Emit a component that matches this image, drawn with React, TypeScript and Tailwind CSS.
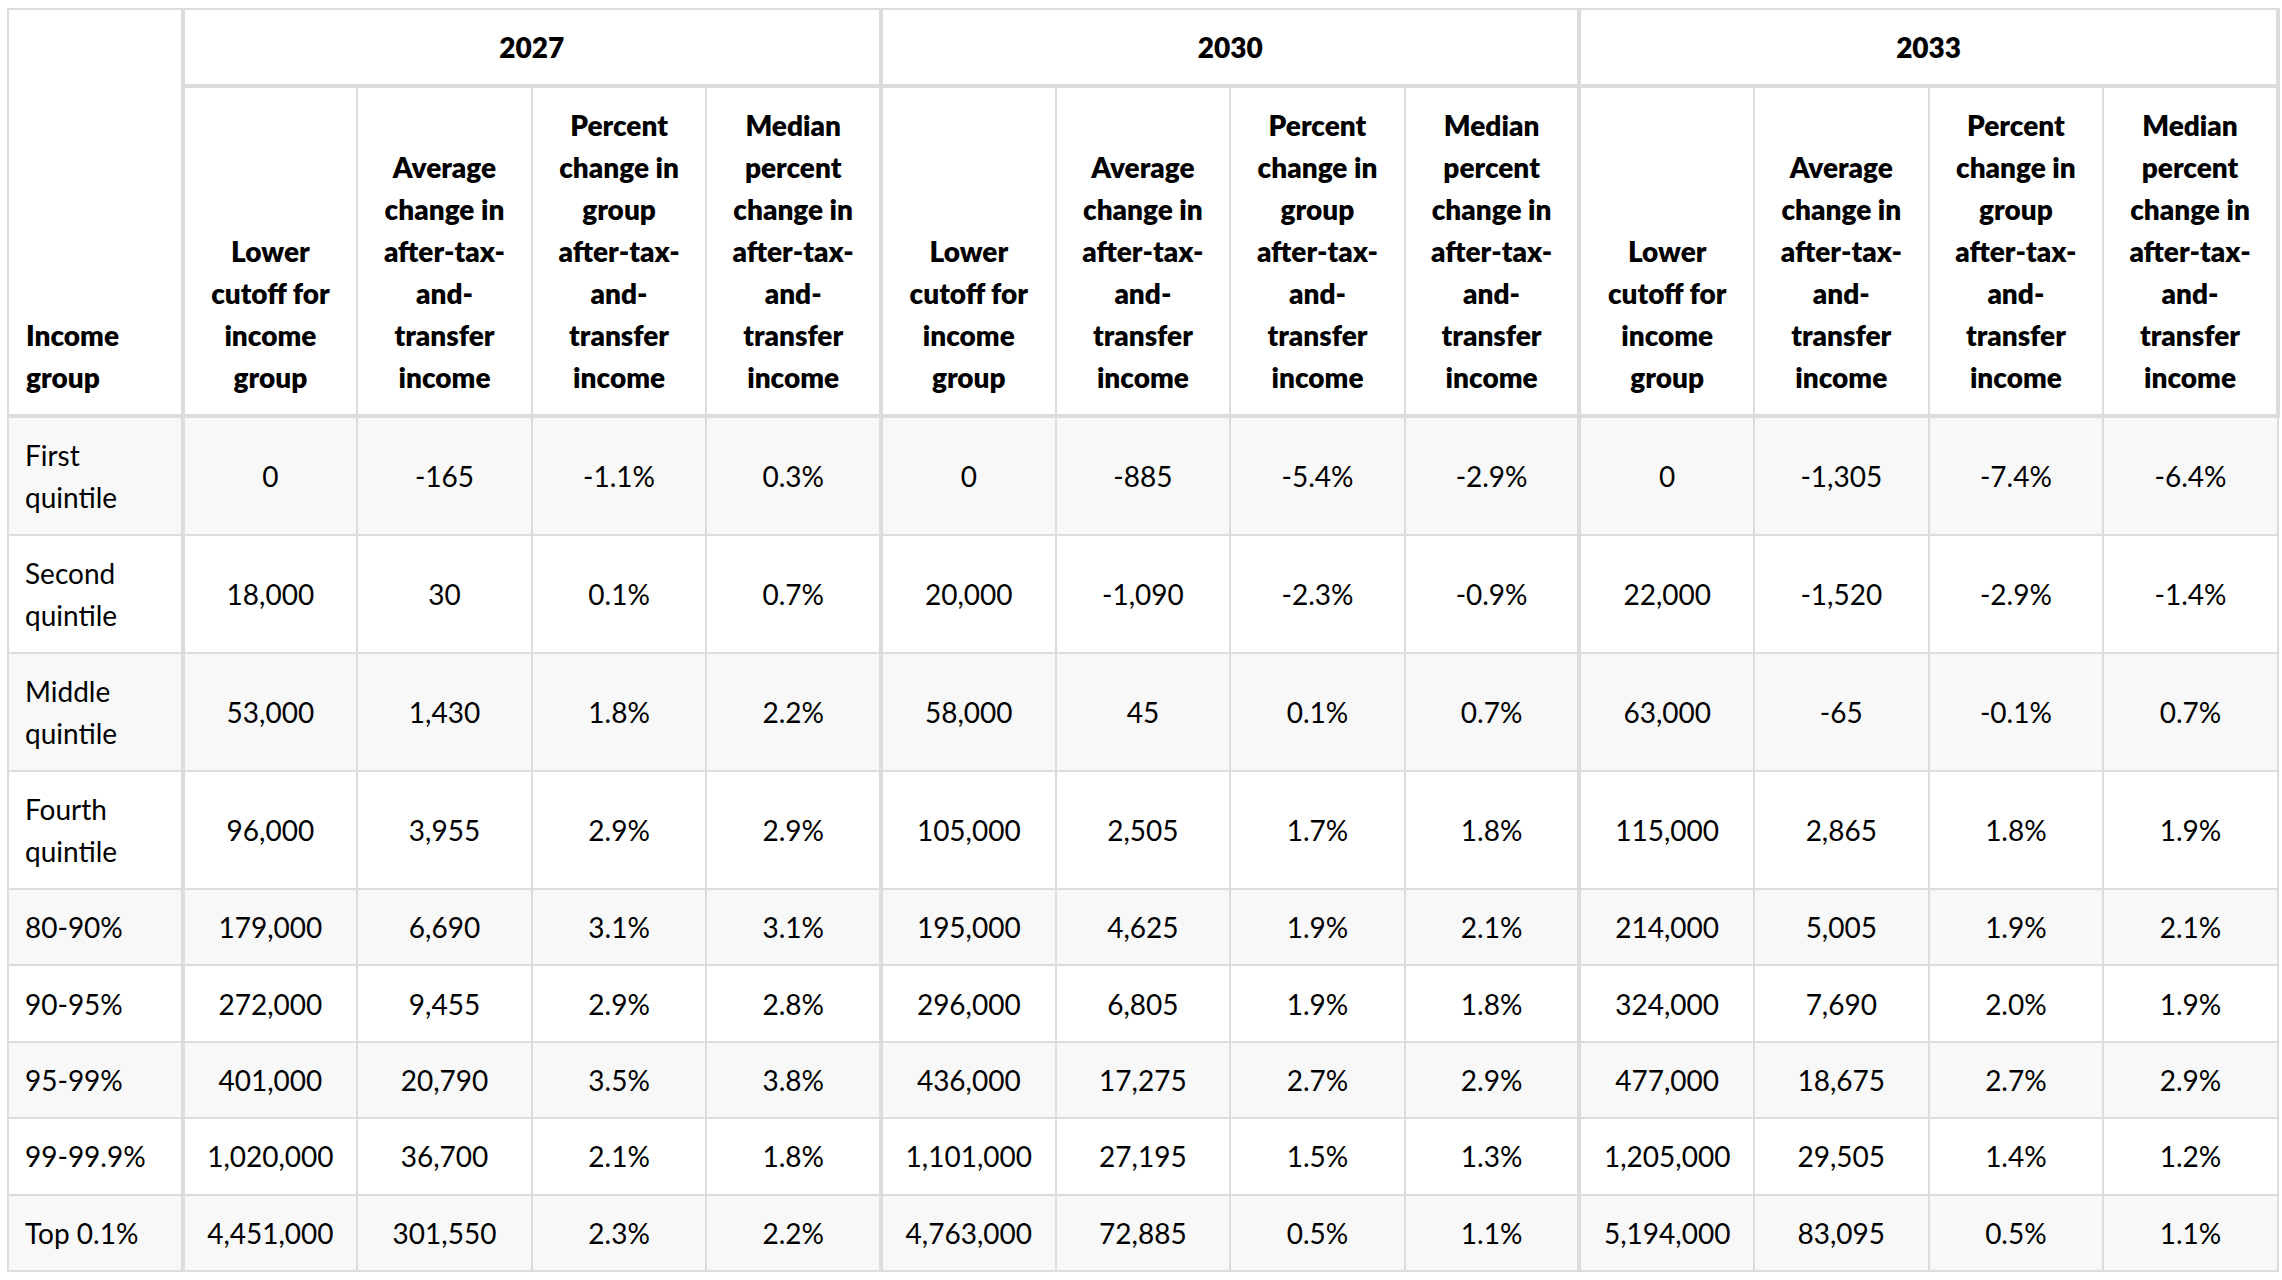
import React from 'react';

const headLines = [
  ['Lower', 'cutoff for', 'income', 'group'],
  ['Average', 'change in', 'after-tax-', 'and-', 'transfer', 'income'],
  ['Percent', 'change in', 'group', 'after-tax-', 'and-', 'transfer', 'income'],
  ['Median', 'percent', 'change in', 'after-tax-', 'and-', 'transfer', 'income'],
];

const years = ['2027', '2030', '2033'];

const rows: string[][] = [
  ['First|quintile', '0', '-165', '-1.1%', '0.3%', '0', '-885', '-5.4%', '-2.9%', '0', '-1,305', '-7.4%', '-6.4%'],
  ['Second|quintile', '18,000', '30', '0.1%', '0.7%', '20,000', '-1,090', '-2.3%', '-0.9%', '22,000', '-1,520', '-2.9%', '-1.4%'],
  ['Middle|quintile', '53,000', '1,430', '1.8%', '2.2%', '58,000', '45', '0.1%', '0.7%', '63,000', '-65', '-0.1%', '0.7%'],
  ['Fourth|quintile', '96,000', '3,955', '2.9%', '2.9%', '105,000', '2,505', '1.7%', '1.8%', '115,000', '2,865', '1.8%', '1.9%'],
  ['80-90%', '179,000', '6,690', '3.1%', '3.1%', '195,000', '4,625', '1.9%', '2.1%', '214,000', '5,005', '1.9%', '2.1%'],
  ['90-95%', '272,000', '9,455', '2.9%', '2.8%', '296,000', '6,805', '1.9%', '1.8%', '324,000', '7,690', '2.0%', '1.9%'],
  ['95-99%', '401,000', '20,790', '3.5%', '3.8%', '436,000', '17,275', '2.7%', '2.9%', '477,000', '18,675', '2.7%', '2.9%'],
  ['99-99.9%', '1,020,000', '36,700', '2.1%', '1.8%', '1,101,000', '27,195', '1.5%', '1.3%', '1,205,000', '29,505', '1.4%', '1.2%'],
  ['Top 0.1%', '4,451,000', '301,550', '2.3%', '2.2%', '4,763,000', '72,885', '0.5%', '1.1%', '5,194,000', '83,095', '0.5%', '1.1%'],
];

// the last column of each year block gets the heavy right rule
const thick = (i: number) => i === 0 || i === 4 || i === 8;

export default function App() {
  return (
    <div
      className="bg-white min-h-screen pl-[7px] pt-[8px] text-black"
      style={{ fontFamily: 'Lato, "Open Sans", sans-serif' }}
    >
      <table className="table-fixed border-collapse w-[2270px] text-[28px] leading-[42px]">
        <colgroup>
          {Array.from({ length: 13 }).map((_, i) => (
            <col key={i} className="w-[174.6px]" />
          ))}
        </colgroup>
        <thead>
          <tr>
            <th
              rowSpan={2}
              className="border-2 border-r-4 border-b-4 border-[#dcdcdc] px-[17px] py-[16px] text-left align-bottom font-extrabold"
            >
              Income
              <br />
              group
            </th>
            {years.map((y) => (
              <th
                key={y}
                colSpan={4}
                className="border-2 border-r-4 border-b-4 border-[#dcdcdc] px-[17px] py-[16px] text-center font-extrabold"
              >
                {y}
              </th>
            ))}
          </tr>
          <tr>
            {years.flatMap((y) =>
              headLines.map((lines, j) => (
                <th
                  key={y + j}
                  className={`border-2 border-b-4 border-[#dcdcdc] px-[6px] py-[16px] text-center align-bottom font-extrabold whitespace-nowrap ${
                    j === 3 ? 'border-r-4' : ''
                  }`}
                >
                  {lines.map((l, k) => (
                    <div key={k}>{l}</div>
                  ))}
                </th>
              ))
            )}
          </tr>
        </thead>
        <tbody>
          {rows.map((r, ri) => (
            <tr
              key={ri}
              className={`${ri % 2 === 0 ? 'bg-[#f8f8f8]' : 'bg-white'} ${
                r[0].includes('|') ? '' : 'h-[76.4px]'
              }`}
            >
              {r.map((c, ci) => (
                <td
                  key={ci}
                  className={`border-2 border-[#dcdcdc] py-[16px] align-middle whitespace-nowrap ${
                    thick(ci) ? 'border-r-4' : ''
                  } ${ci === 0 ? 'text-left px-[16px]' : 'text-center px-[4px]'}`}
                >
                  {c.split('|').map((part, k) => (
                    <div key={k}>{part}</div>
                  ))}
                </td>
              ))}
            </tr>
          ))}
        </tbody>
      </table>
    </div>
  );
}
